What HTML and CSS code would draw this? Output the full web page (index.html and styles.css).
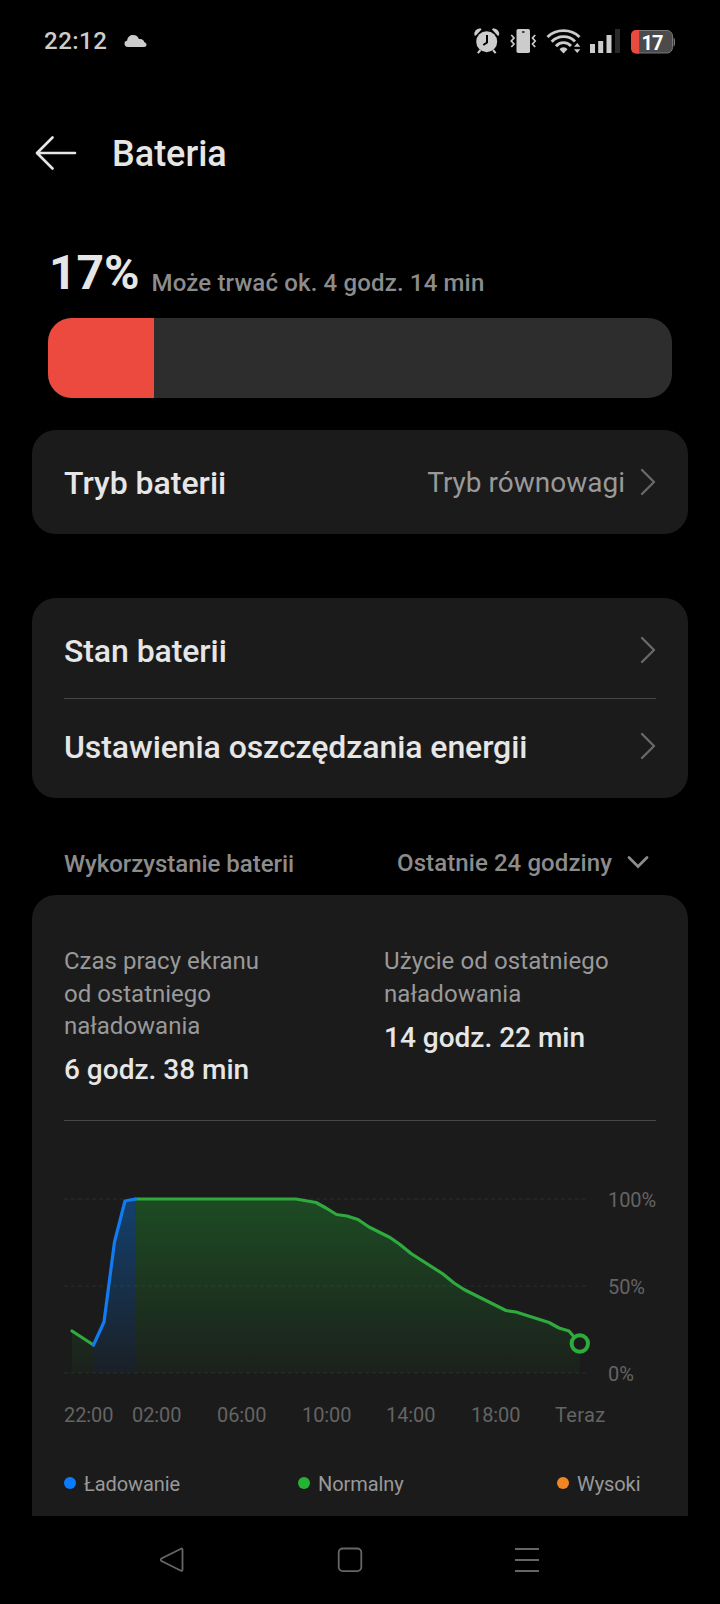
FILE: index.html
```html
<!DOCTYPE html>
<html lang="pl">
<head>
<meta charset="utf-8">
<title>Bateria</title>
<link rel="stylesheet" href="styles.css">
</head>
<body>
<div class="screen">
  <header class="status">
    <span class="clock">22:12</span>
    <svg class="cloud" width="24" height="14" viewBox="0 0 24 14"><path d="M4 13C1.600 13 .5 11.500 .5 9.700C.5 7.800 1.500 6.800 3.200 6.400C3.500 3 6 1 9.200 1C12 1 14 2.500 14.900 5C18 4.500 20 6 20.300 8.300C21.700 8.600 22.500 9.500 22.500 10.800C22.500 12.200 21.500 13 20 13Z"/></svg>
    <svg class="icons" width="212" height="32" viewBox="470 25 212 32">
      <g fill="#ccc">
        <circle cx="486.700" cy="41.700" r="10.500"/>
        <path d="M474.500 35.500Q473.500 29 480.500 28.300L481.500 29.500L475.700 35.700ZM499 35.500Q500 29 493 28.300L492 29.500L497.800 35.700Z"/>
        <path d="M480.500 50L477.800 53.200M493 50L495.700 53.200" stroke="#ccc" stroke-width="2"/>
        <path d="M487 35V42.500L483.300 45" fill="none" stroke="#000" stroke-width="2"/>
        <rect x="516.500" y="29" width="13.500" height="24" rx="1.800"/>
        <rect x="522" y="31" width="2.500" height="2" fill="#444"/>
        <g fill="none" stroke="#ccc" stroke-width="1.700"><path d="M511.300 35L514 38L511.300 41L514 44L511.300 47M535.200 35L532.500 38L535.200 41L532.500 44L535.200 47"/></g>
        <g fill="none" stroke="#ccc" stroke-width="2.900"><path d="M547.500 37C556 28.500 571 28.500 579.500 37M551.700 41.700C558 35 569 35 575 41.500M556 46.200C560 41.500 567 41.500 571 46"/></g>
        <path d="M559.500 49.200C561.500 46.500 565.500 46.500 567.500 49.200L563.500 53.500Z"/>
        <path d="M574 46.700L577.200 43L580.400 46.700ZM574 49.200L577.200 53L580.400 49.200Z"/>
        <rect x="590" y="44" width="5" height="9"/><rect x="598.200" y="41" width="5" height="12"/><rect x="606.500" y="35" width="5" height="18"/>
        <rect x="615" y="29" width="5" height="24" fill="#292929"/>
      </g>
      <rect x="631.500" y="30.500" width="41" height="22.500" rx="5.500" fill="#4b4b4b" stroke="#777"/>
      <path d="M673.500 37.500Q675 38 675 40V44Q675 46 673.500 46.500Z" fill="#777"/>
      <path d="M639.200 30H636.500Q631 30 631 35.500V48Q631 53.500 636.500 53.500H639.200Z" fill="#eb4a3f"/>
      <text class="pct" x="652.500" y="50" text-anchor="middle" textLength="22">17</text>
    </svg>
  </header>

  <div class="titlebar">
    <svg width="44" height="36" viewBox="34 136 44 36"><path d="M75 153H37.500M52.500 137.500L37 153L52.500 168.500" fill="none" stroke="#e6e6e6" stroke-width="2.600" stroke-linecap="round" stroke-linejoin="round"/></svg>
    <h1>Bateria</h1>
  </div>

  <div class="level"><strong>17%</strong><span>Może trwać ok. 4 godz. 14 min</span></div>
  <div class="meter"><div class="meter-fill" style="width:17%"></div></div>

  <section class="card mode">
    <div class="row"><span class="label">Tryb baterii</span><span class="value">Tryb równowagi</span>
      <svg class="chev" width="16" height="28" viewBox="0 0 16 28"><path d="M2 2L14 14L2 26"/></svg></div>
  </section>

  <section class="card options">
    <div class="row"><span class="label">Stan baterii</span>
      <svg class="chev" width="16" height="28" viewBox="0 0 16 28"><path d="M2 2L14 14L2 26"/></svg></div>
    <div class="row"><span class="label">Ustawienia oszczędzania energii</span>
      <svg class="chev" width="16" height="28" viewBox="0 0 16 28"><path d="M2 2L14 14L2 26"/></svg></div>
  </section>

  <div class="usage-head">
    <span class="usage-title">Wykorzystanie baterii</span>
    <span class="range">Ostatnie 24 godziny</span>
    <svg width="24" height="14" viewBox="0 0 24 14"><path d="M3 1.500L12 10.500L21 1.500" fill="none" stroke="#8c8c8c" stroke-width="2.700" stroke-linecap="round"/></svg>
  </div>

  <section class="card usage">
    <div class="stats">
      <div class="stat"><p>Czas pracy ekranu<br>od ostatniego<br>naładowania</p><b>6 godz. 38 min</b></div>
      <div class="stat second"><p>Użycie od ostatniego<br>naładowania</p><b>14 godz. 22 min</b></div>
    </div>
    <svg class="chart" width="624" height="340" viewBox="64 1121 624 340">
      <defs>
        <linearGradient id="green" gradientUnits="userSpaceOnUse" x1="0" y1="1199" x2="0" y2="1373"><stop offset="0" stop-color="#22b035" stop-opacity=".32"/><stop offset="1" stop-color="#22b035" stop-opacity=".04"/></linearGradient>
        <linearGradient id="blue" gradientUnits="userSpaceOnUse" x1="0" y1="1199" x2="0" y2="1373"><stop offset="0" stop-color="#087cf5" stop-opacity=".38"/><stop offset="1" stop-color="#087cf5" stop-opacity=".05"/></linearGradient>
      </defs>
      <path class="grid" d="M64 1199H586M64 1286H586M64 1373H586"/>
      <path fill="url(#green)" d="M72 1331L93.500 1345V1373H72Z"/>
      <path fill="url(#blue)" d="M93.500 1345L104 1322L114.500 1242L125 1201L135.500 1199V1373H93.500Z"/>
      <path fill="url(#green)" d="M135.500 1199H296L316 1202.500L326 1208L336.500 1214.500L347 1216L358 1219.500L369 1227L390 1237.500L400 1244.500L411 1253.500L443 1274L454 1283L464 1289.500L506 1310.500L516 1312L549 1322.500L559 1328L569 1331L579.700 1343.500V1373H135.500Z"/>
      <path class="line" stroke="#2faa3e" d="M72 1331L93.500 1345M135.500 1199H296L316 1202.500L326 1208L336.500 1214.500L347 1216L358 1219.500L369 1227L390 1237.500L400 1244.500L411 1253.500L443 1274L454 1283L464 1289.500L506 1310.500L516 1312L549 1322.500L559 1328L569 1331L579.700 1343.500"/>
      <path class="line" stroke="#117cf2" d="M93.500 1345L104 1322L114.500 1242L125 1201L135.500 1199"/>
      <circle cx="579.800" cy="1343.500" r="8.200" fill="#1b1b1b" stroke="#2bad3c" stroke-width="4"/>
      <g class="axis">
        <text x="608" y="1207">100%</text><text x="608" y="1294">50%</text><text x="608" y="1381">0%</text>
        <text x="64" y="1422">22:00</text><text x="132" y="1422">02:00</text><text x="217" y="1422">06:00</text><text x="302" y="1422">10:00</text><text x="386" y="1422">14:00</text><text x="471" y="1422">18:00</text><text x="555" y="1422" textLength="50">Teraz</text>
      </g>
    </svg>
    <div class="legend">
      <span class="key charge">Ładowanie</span><span class="key normal">Normalny</span><span class="key high">Wysoki</span>
    </div>
  </section>

  <nav class="nav">
    <svg width="28" height="28" viewBox="0 0 28 28"><path d="M23 2.700Q24.500 2 24.500 4V23.500Q24.500 25.500 23 24.700L3.500 15Q2 13.700 3.500 12.500Z"/></svg>
    <svg width="28" height="28" viewBox="0 0 28 28"><rect x="2.700" y="2.500" width="22.600" height="22.600" rx="4"/></svg>
    <svg width="28" height="28" viewBox="0 0 28 28"><path d="M2 3H26M2 14H26M2 25H26"/></svg>
  </nav>
</div>
</body>
</html>
```
FILE: styles.css
```css
* { box-sizing: border-box; }
body { margin: 0; background: #000; font-family: Roboto, "Noto Sans", sans-serif; color: #e6e6e6; }
h1, p { margin: 0; }
svg { display: block; flex: none; }
.screen { width: 720px; height: 1604px; overflow: hidden; display: flex; flex-direction: column; }

.status { height: 82px; padding: 0 38px 0 44px; display: flex; align-items: center; }
.clock { width: 80px; font-size: 24px; font-weight: 500; letter-spacing: .5px; color: #ccc; }
.cloud { fill: #ccc; }
.icons { margin-left: auto; }
.pct { font-size: 20px; font-weight: 700; fill: #fff; }

.titlebar { height: 144px; padding-left: 34px; display: flex; align-items: center; gap: 34px; }
h1 { font-size: 36px; font-weight: 500; line-height: 44px; }

.level { height: 92px; padding: 17px 0 0 49px; display: flex; align-items: flex-start; gap: 12px; }
.level strong { font-size: 48px; font-weight: 700; line-height: 60px; }
.level span { margin-top: 26px; font-size: 24px; line-height: 28px; font-weight: 500; letter-spacing: .15px; color: #8c8c8c; }
.meter { height: 80px; margin: 0 48px; background: #2d2d2d; border-radius: 24px; overflow: hidden; }
.meter-fill { height: 100%; background: #ec4a3f; }

.card { margin: 0 32px; background: #1b1b1b; border-radius: 24px; }
.row { display: flex; align-items: center; margin: 0 32px; }
.label { flex: 1; padding-top: 1px; font-size: 32px; font-weight: 500; letter-spacing: -.08px; }
.mode .label { letter-spacing: 0; }
.value { font-size: 28px; color: #999; margin-right: 15px; }
.chev { fill: none; stroke: #686868; stroke-width: 2.4; stroke-linecap: round; stroke-linejoin: round; }
.mode { margin-top: 32px; }
.mode .row { height: 104px; }
.options { margin-top: 64px; height: 200px; padding: 4px 0; }
.options .row { height: 96px; }
.options .row + .row { height: 95px; border-top: 1px solid #484848; }

.usage-head { height: 97px; padding: 33px 70px 0 64px; display: flex; align-items: center; font-size: 24px; font-weight: 500; color: #8c8c8c; }
.usage-title { flex: 1; padding-top: 2px; letter-spacing: -.04px; }
.range { margin-right: 14px; letter-spacing: .08px; }

.usage { height: 621px; border-radius: 24px 24px 0 0; padding-left: 32px; }
.stats { height: 226px; width: 592px; padding-top: 50px; display: grid; grid-template-columns: 320px 1fr; border-bottom: 1px solid #484848; }
.stat p { font-size: 24px; line-height: 32.5px; color: #999; }
.stat b { display: block; margin-top: 9px; font-size: 28px; line-height: 36px; font-weight: 500; }
.second p { letter-spacing: .1px; }
.second b { margin-top: 10px; }
.grid { stroke: #252827; stroke-width: 1.5; stroke-dasharray: 4 3; }
.line { fill: none; stroke-width: 3.2; stroke-linejoin: round; stroke-linecap: round; }
.axis { font-size: 20px; letter-spacing: -.1px; fill: #646464; }
.legend { height: 44px; display: grid; grid-template-columns: 234px 259px 1fr; align-items: center; }
.key { padding-top: 2px; font-size: 20px; letter-spacing: -.08px; color: #999; display: flex; align-items: center; gap: 8px; }
.key::before { content: ""; width: 12px; height: 12px; margin-top: -2px; border-radius: 50%; background: #087cff; }
.normal::before { background: #25b334; }
.high::before { background: #f08524; }

.nav { height: 88px; padding: 0 179px 0 158px; display: flex; align-items: center; justify-content: space-between; }
.nav svg { fill: none; stroke: #666; stroke-width: 1.8; }
```
